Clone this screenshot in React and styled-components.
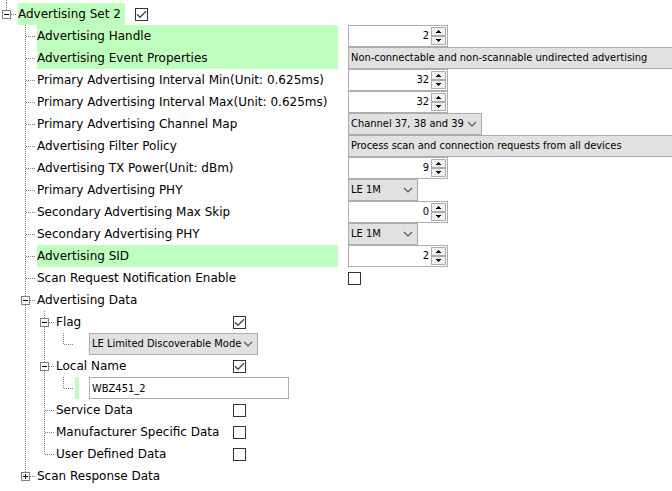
import React, { useId, useState } from "react";
import styled, { createGlobalStyle, css } from "styled-components";

const LABEL_FONT = '"DejaVu Sans", Verdana, sans-serif';
const CONTROL_FONT = '"DejaVu Sans Condensed", Tahoma, sans-serif';
const HIGHLIGHT = "#beffbe";
const BORDER = "#acacb2";
const FACE = "#e1e1e1";

const GlobalStyle = createGlobalStyle`
  *, *::before, *::after { box-sizing: border-box; }
  body {
    margin: 0;
    background: #fff;
    color: #000;
    font: 12px/22px ${LABEL_FONT};
  }
`;

const Page = styled.main`
  overflow: hidden;
`;

const Row = styled.div`
  display: flex;
  align-items: center;
  height: ${(p) => (p.$stub ? 3 : 22)}px;
`;

const dotsDown = "repeating-linear-gradient(to bottom, #808080 0 1px, transparent 1px 2px)";
const dotsAcross = "repeating-linear-gradient(to right, #808080 0 1px, transparent 1px 2px)";

const guides = {
  blank: css``,
  line: css`
    background: ${dotsDown} right 11px top / 1px 100%;
  `,
  tee: css`
    background: ${dotsDown} right 11px top / 1px 100%, ${dotsAcross} right 2px top 11px / 9px 1px;
  `,
  end: css`
    background: ${dotsDown} right 11px top / 1px 12px, ${dotsAcross} right 2px top 11px / 9px 1px;
  `,
};

const Guide = styled.span`
  flex: none;
  display: flex;
  justify-content: flex-end;
  align-items: center;
  align-self: stretch;
  width: ${(p) => (p.$root ? 18 : 19)}px;
  padding: 1px 7px 0 0;
  ${(p) => guides[p.$kind]}
  background-repeat: no-repeat;
`;

const Expander = styled.button`
  display: block;
  width: 9px;
  height: 9px;
  padding: 0;
  border: 1px solid #808080;
  background: #fff;
  svg {
    display: block;
  }
`;

const Label = styled.label`
  flex: none;
  height: 22px;
  padding-top: 1px;
  line-height: 21px;
  width: ${(p) => p.$width || "auto"};
  margin-right: 10px;
  white-space: nowrap;
  background: ${(p) => (p.$changed ? HIGHLIGHT : "transparent")};
`;

const HEADING = "107px";
const SETTING = "301px";
const DATA = "167px";

const CheckFrame = styled.span`
  display: grid;
  width: 13px;
  height: 13px;
  > * {
    grid-area: 1 / 1;
  }
  svg {
    pointer-events: none;
    visibility: hidden;
  }
  input:checked + svg {
    visibility: visible;
  }
`;

const CheckInput = styled.input`
  appearance: none;
  width: 13px;
  height: 13px;
  margin: 0;
  border: 1px solid #333;
  background: #fff;
`;

const SpinFrame = styled.span`
  flex: none;
  display: flex;
  width: 100px;
  height: 22px;
  padding: 1px;
  border: 1px solid ${BORDER};
  background: #fff;
`;

const SpinInput = styled.input`
  flex: 1;
  min-width: 0;
  padding: 0 2px 0 0;
  border: 0;
  outline: 0;
  background: transparent;
  color: #000;
  text-align: right;
  font: 11px/18px ${CONTROL_FONT};
  appearance: textfield;
  &::-webkit-inner-spin-button {
    appearance: none;
    margin: 0;
  }
`;

const SpinButtons = styled.span`
  display: flex;
  flex-direction: column;
`;

const SpinButton = styled.button`
  display: grid;
  place-items: center;
  width: 15px;
  height: 9px;
  padding: 0;
  border: 1px solid ${BORDER};
  background: #f0f0f0;
`;

const SelectFrame = styled.span`
  flex: ${(p) => (p.$width ? "none" : "1 0 360px")};
  display: grid;
  align-items: center;
  width: ${(p) => p.$width || "auto"};
  > * {
    grid-area: 1 / 1;
  }
  svg {
    justify-self: end;
    margin-right: 5px;
    pointer-events: none;
  }
`;

const SelectInput = styled.select`
  appearance: none;
  width: 100%;
  height: 22px;
  padding: 0 2px;
  border: 1px solid ${BORDER};
  border-radius: 0;
  background: ${FACE};
  color: #000;
  font: 11px/18px ${CONTROL_FONT};
`;

const ChangedBar = styled.span`
  width: 4px;
  height: 22px;
  margin-right: 10px;
  background: ${(p) => (p.$changed ? HIGHLIGHT : "transparent")};
`;

const TextInput = styled.input`
  width: 200px;
  height: 22px;
  padding: 0 2px;
  border: 1px solid ${BORDER};
  background: #fff;
  color: #000;
  font: 11px/18px ${CONTROL_FONT};
`;

function Toggle({ open }) {
  return (
    <Expander type="button" aria-label={open ? "Collapse" : "Expand"}>
      <svg width="7" height="7" shapeRendering="crispEdges">
        <path d={open ? "M1 3h5v1H1z" : "M1 3h5v1H1zM3 1h1v5H3z"} fill="#000" />
      </svg>
    </Expander>
  );
}

function Check({ id, checked }) {
  return (
    <CheckFrame>
      <CheckInput type="checkbox" id={id} defaultChecked={checked} />
      <svg width="13" height="13" viewBox="0 0 13 13" fill="none" stroke="#444" strokeWidth="1.3">
        <path d="M2 6.3 5 9.3 11 3.3" />
      </svg>
    </CheckFrame>
  );
}

function Spin({ id, initial }) {
  const [value, setValue] = useState(initial);
  return (
    <SpinFrame>
      <SpinInput id={id} type="number" value={value} onChange={(e) => setValue(e.target.value)} />
      <SpinButtons>
        <SpinButton type="button" aria-label="Increase" onClick={() => setValue(Number(value) + 1)}>
          <svg width="5" height="3" shapeRendering="crispEdges">
            <path d="M2 0h1v1h1v1h1v1H0V2h1V1h1z" />
          </svg>
        </SpinButton>
        <SpinButton type="button" aria-label="Decrease" onClick={() => setValue(Number(value) - 1)}>
          <svg width="5" height="3" shapeRendering="crispEdges">
            <path d="M0 0h5v1H4v1H3v1H2V2H1V1H0z" />
          </svg>
        </SpinButton>
      </SpinButtons>
    </SpinFrame>
  );
}

function Select({ id, value, width, label }) {
  return (
    <SelectFrame $width={width}>
      <SelectInput id={id} aria-label={label}>
        <option>{value}</option>
      </SelectInput>
      <svg width="10" height="6" viewBox="0 0 10 6" fill="none" stroke="#555" strokeWidth="1.2">
        <path d="M1 1 5 5 9 1" />
      </svg>
    </SelectFrame>
  );
}

function Guides({ kinds, open }) {
  return kinds.map((kind, i) => (
    <Guide key={i} $root={i === 0} $kind={kind}>
      {open !== undefined && i === kinds.length - 1 && <Toggle open={open} />}
    </Guide>
  ));
}

function Node({ kinds, open, label, changed, width, control }) {
  const id = useId();
  return (
    <Row>
      <Guides kinds={kinds} open={open} />
      <Label as={control ? "label" : "span"} htmlFor={control ? id : undefined} $changed={changed} $width={width}>
        {label}
      </Label>
      {control && control(id)}
    </Row>
  );
}

const spin = (n) => (id) => <Spin id={id} initial={n} />;
const check = (on) => (id) => <Check id={id} checked={on} />;
const select = (value, width) => (id) => <Select id={id} value={value} width={width} />;

const settings = [
  ["Advertising Handle", spin(2), true],
  ["Advertising Event Properties", select("Non-connectable and non-scannable undirected advertising"), true],
  ["Primary Advertising Interval Min(Unit: 0.625ms)", spin(32)],
  ["Primary Advertising Interval Max(Unit: 0.625ms)", spin(32)],
  ["Primary Advertising Channel Map", select("Channel 37, 38 and 39", "134px")],
  ["Advertising Filter Policy", select("Process scan and connection requests from all devices")],
  ["Advertising TX Power(Unit: dBm)", spin(9)],
  ["Primary Advertising PHY", select("LE 1M", "70px")],
  ["Secondary Advertising Max Skip", spin(0)],
  ["Secondary Advertising PHY", select("LE 1M", "70px")],
  ["Advertising SID", spin(2), true],
  ["Scan Request Notification Enable", check(false)],
];

export default function App() {
  return (
    <Page>
      <GlobalStyle />
      <Row $stub>
        <Guide $root $kind="line" />
      </Row>
      <Node kinds={["end"]} open label="Advertising Set 2" changed width={HEADING} control={check(true)} />
      {settings.map(([label, control, changed]) => (
        <Node key={label} kinds={["blank", "tee"]} label={label} changed={changed} width={SETTING} control={control} />
      ))}
      <Node kinds={["blank", "tee"]} open label="Advertising Data" />
      <Node kinds={["blank", "line", "tee"]} open label="Flag" width={DATA} control={check(true)} />
      <Row>
        <Guides kinds={["blank", "line", "line", "end"]} />
        <ChangedBar />
        <Select label="Flag mode" value="LE Limited Discoverable Mode" width="169px" />
      </Row>
      <Node kinds={["blank", "line", "tee"]} open label="Local Name" width={DATA} control={check(true)} />
      <Row>
        <Guides kinds={["blank", "line", "line", "end"]} />
        <ChangedBar $changed />
        <TextInput aria-label="Local name value" defaultValue="WBZ451_2" />
      </Row>
      <Node kinds={["blank", "line", "tee"]} label="Service Data" width={DATA} control={check(false)} />
      <Node kinds={["blank", "line", "tee"]} label="Manufacturer Specific Data" width={DATA} control={check(false)} />
      <Node kinds={["blank", "line", "end"]} label="User Defined Data" width={DATA} control={check(false)} />
      <Node kinds={["blank", "end"]} open={false} label="Scan Response Data" />
    </Page>
  );
}
